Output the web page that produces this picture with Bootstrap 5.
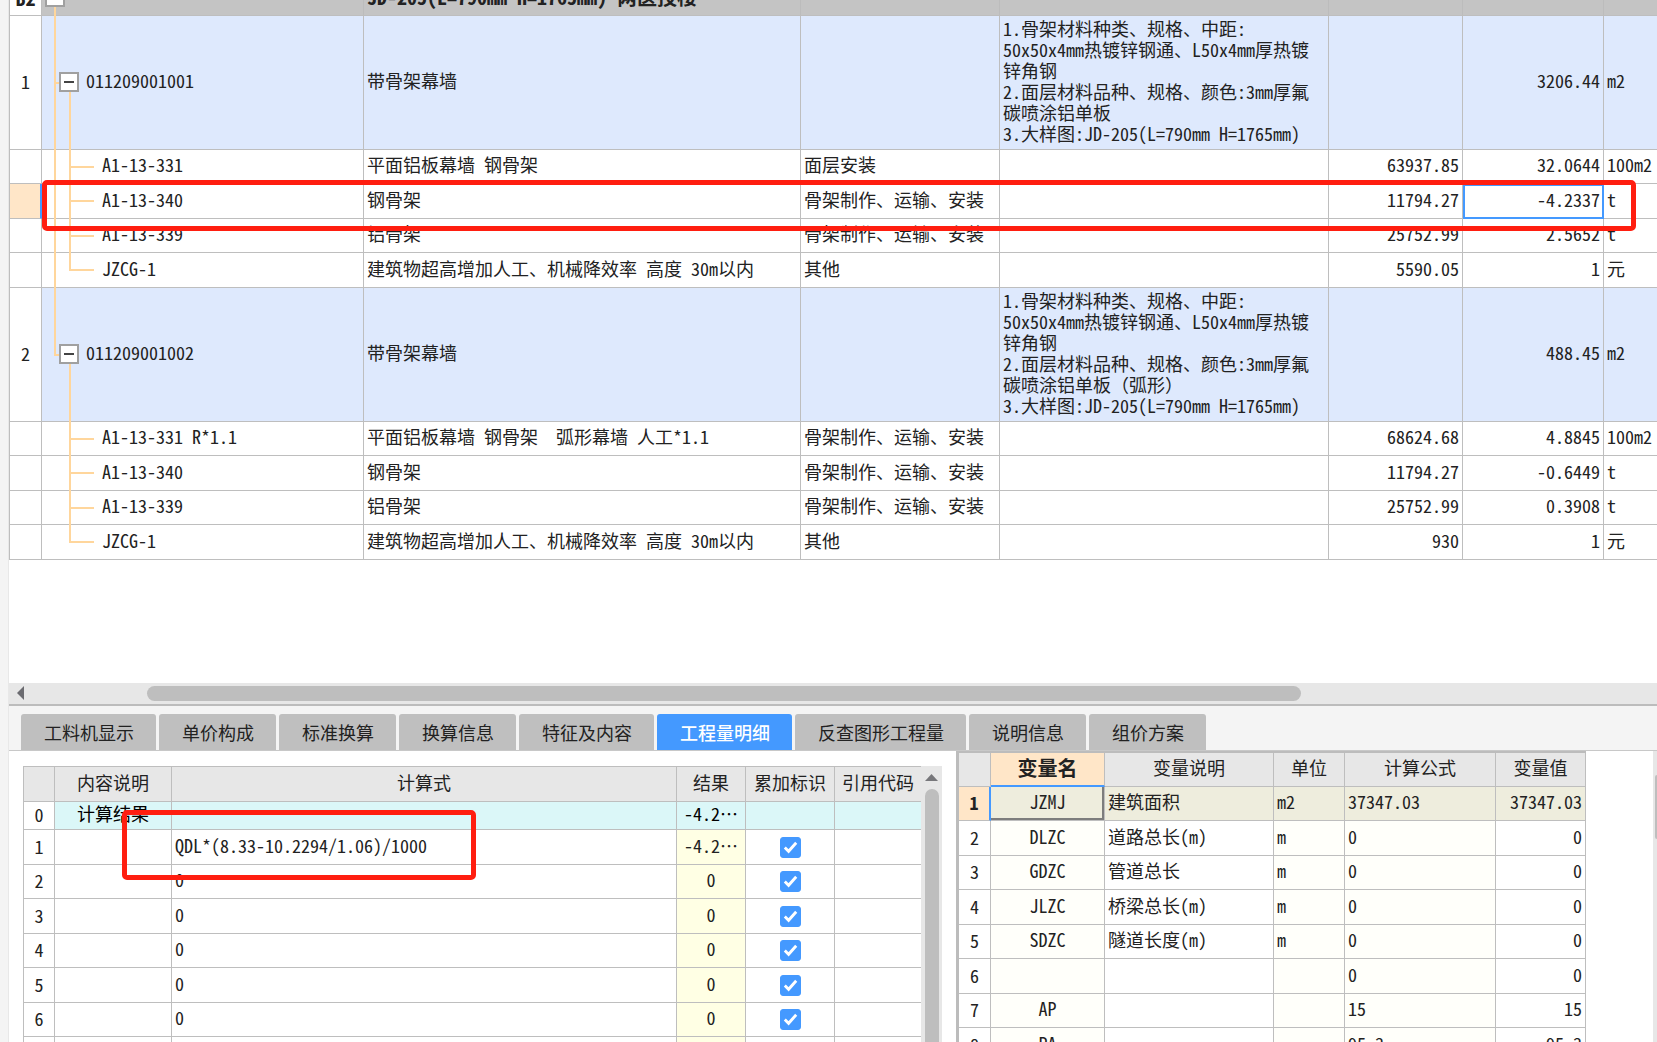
<!DOCTYPE html>
<html lang="zh-CN">
<head>
<meta charset="utf-8">
<meta name="viewport" content="width=device-width, initial-scale=1">
<title>工程量明细</title>
<link href="https://cdn.jsdelivr.net/npm/bootstrap@5.3.0/dist/css/bootstrap.min.css" rel="stylesheet">
<style>
:root{--line:#bebebe;--accent:#4499ff;--tree:#ffd69c;--hot:#ffe6c8;--callout:#ff1e10}
body{font:18px/21px "Noto Sans Mono CJK SC","Noto Sans CJK SC",monospace;color:#222;background:#fff}
.gutter{flex:0 0 9px;background:#f4f4f4;border-right:1px solid #e8e8e8}
.sheet{table-layout:fixed;border-collapse:separate;border-spacing:0}
.sheet td,.sheet th{border:solid var(--line);border-width:0 1px 1px 0;padding:0 3px 4px;font-weight:400;white-space:nowrap;overflow:hidden;vertical-align:middle}
.sheet .idx{padding:0 0 2px;text-align:center}
.sheet .num{text-align:right}

/* bill of quantities */
.bill{margin-top:-19px;border-left:1px solid var(--line)}
.bill tr{height:35px}
.bill tr.odd-step{height:34px}
.bill tr.item{height:134px}
.bill .item td:not(.idx){background:#dee9fd}
.bill .group td:not(.idx){background:#c4c4c4;border-right-color:#bcbcbc}
.bill .group td{font-size:20px;font-weight:700}
.bill .spec{white-space:normal}
.bill .current .idx{background:var(--hot);border-right:2px solid var(--accent)}
.bill .picked{border-right-color:var(--accent);border-bottom-color:var(--accent);box-shadow:inset 2px 2px 0 var(--accent),inset -1px -1px 0 var(--accent)}
.sheet td.tree{position:relative;overflow:visible;padding-left:60px}
.sheet .item td.tree{padding-left:44px}
.trunk::before,.tree::after,.tree i{content:"";position:absolute;background:var(--tree)}
.trunk::before{left:12px;top:0;width:2px;height:calc(100% + 1px)}
.trunk.start::before{top:50%}
.trunk.last::before{height:50%}
.tree::after{left:27px;top:0;width:2px;height:calc(100% + 1px)}
.group .tree::after{display:none}
.item .tree::after{top:50%;height:calc(50% + 1px)}
.sheet .tree.tail::after{height:50%}
.tree i{left:27px;top:50%;width:25px;height:2px;margin-top:-1px}
.item .tree i{left:12px;width:6px}
.toggler{position:absolute;z-index:1;left:17px;top:50%;margin-top:-11px;width:20px;height:20px;padding:0;background:#fff;border:2px solid #a0a0a0;display:flex;align-items:center;justify-content:center}
.group .toggler{left:3px}
.toggler::before{content:"";width:10px;height:2px;background:#444}
.canvas-end{height:123px}

/* scroll bars */
.hbar{height:21px;background:#e7e7e7;padding-bottom:1px}
.hbar .grip{height:15px;border-radius:8px;background:#bebebe;margin-left:123px;width:70%}
.vbar{flex:0 0 21px;background:#e7e7e7}
.vbar .grip{width:14px;border-radius:7px 7px 0 0;background:#bebebe}
.divider{height:2px;background:#bcbcbc}

/* tabs */
.tabstrip{background:#f4f4f4;border-bottom:1px solid #c8c8c8;padding:8px 12px 0;gap:3px;flex-wrap:nowrap}
.tabstrip .nav-link{font:18px/21px "Noto Sans CJK SC",sans-serif;height:36px;padding:0 22px 0 23px;border:0;border-radius:3px 3px 0 0;background:#bfbfbf;color:#222;white-space:nowrap}
.tabstrip .nav-link.active{background:var(--accent);color:#fff;font-weight:500}

/* lower panes */
.calc-pane{flex:0 0 947px;padding:15px 14px 0 14px}
.calc{border:solid var(--line);border-width:1px 0 0 1px}
.calc tr,.vars tr{height:35px}
.calc tr:nth-child(odd),.vars tr:nth-child(odd){height:34px}
.calc thead tr:nth-child(odd){height:35px}
.calc tbody tr.total{height:28px}
.sheet thead th{background:#e7e7e7;text-align:center;font-family:"Noto Sans CJK SC",sans-serif}
.calc .total td:not(.idx){background:#dbf7f8;color:#000}
.calc .res{background:#ffffe4;text-align:center}
.sheet .last-col{border-right:0}
.form-check-input.tick{width:21px;height:21px;margin:3px 0 0;float:none;border-radius:3px;vertical-align:middle}
.form-check-input.tick:checked{background-color:var(--accent);border-color:var(--accent);background-image:url("data:image/svg+xml,%3csvg xmlns='http://www.w3.org/2000/svg' viewBox='0 0 20 20'%3e%3cpath fill='none' stroke='%23fff' stroke-width='3' d='M4 10l4 4 8-9'/%3e%3c/svg%3e")}
.vars-pane{border-left:3px solid #bcbcbc}
.vars{border-top:2px solid #bcbcbc}
.vars td{background:#fff}
.vars td:nth-child(2),.vars td:nth-child(4),.vars td:nth-child(5){background:#fffffa}
.vars td:nth-child(2){text-align:center}
.vars .current td{background:#eeeddd}
.vars .current td.idx{background:var(--hot);font-weight:700;border-right:2px solid var(--accent)}
.vars .current td.picked{box-shadow:inset -2px -2px 0 #7d7d7d}
.vars thead th.hot{background:var(--hot);font-size:20px;font-weight:700;border-bottom:2px solid var(--accent)}
.edge{flex:0 0 4px;background:#e7e7e7}
.edge .grip{background:#bebebe;margin:24px 0 0 2px;height:64px;border-radius:4px 0 0 4px}

/* red callouts drawn over the grids */
.callout{position:absolute;z-index:3;border:5px solid var(--callout);border-radius:5px;pointer-events:none}
.callout.row-mark{left:33px;right:21px;top:180px;height:51px}
.callout.formula-mark{left:113px;top:59px;width:354px;height:70px}
</style>
</head>
<body>
<div class="d-flex vh-100 overflow-hidden">
  <div class="gutter"></div>
  <main class="d-flex flex-column flex-grow-1 overflow-hidden">
    <section class="position-relative overflow-hidden flex-shrink-0">
      <table class="sheet bill w-100">
        <colgroup><col style="width:32px"><col style="width:322px"><col><col style="width:199px"><col style="width:329px"><col style="width:134px"><col style="width:141px"><col style="width:53px"></colgroup>
        <tbody>
          <tr class="group"><td class="idx">B2</td><td class="tree trunk start"><button class="toggler" type="button" aria-label="折叠"></button></td><td>JD-205(L=790mm H=1765mm) 两医技楼</td><td></td><td></td><td></td><td></td><td class="last-col"></td></tr>
          <tr class="item"><td class="idx">1</td><td class="tree trunk"><i></i><button class="toggler" type="button" aria-label="折叠"></button>011209001001</td><td>带骨架幕墙</td><td></td><td class="spec">1.骨架材料种类、规格、中距:<br>50x50x4mm热镀锌钢通、L50x4mm厚热镀锌角钢<br>2.面层材料品种、规格、颜色:3mm厚氟碳喷涂铝单板<br>3.大样图:JD-205(L=790mm H=1765mm)</td><td></td><td class="num">3206.44</td><td class="last-col">m2</td></tr>
          <tr class="odd-step"><td class="idx"></td><td class="tree trunk"><i></i>A1-13-331</td><td>平面铝板幕墙 钢骨架</td><td>面层安装</td><td></td><td class="num">63937.85</td><td class="num">32.0644</td><td class="last-col">100m2</td></tr>
          <tr class="current"><td class="idx"></td><td class="tree trunk"><i></i>A1-13-340</td><td>钢骨架</td><td>骨架制作、运输、安装</td><td></td><td class="num">11794.27</td><td class="num picked">-4.2337</td><td class="last-col">t</td></tr>
          <tr class="odd-step"><td class="idx"></td><td class="tree trunk"><i></i>A1-13-339</td><td>铝骨架</td><td>骨架制作、运输、安装</td><td></td><td class="num">25752.99</td><td class="num">2.5652</td><td class="last-col">t</td></tr>
          <tr><td class="idx"></td><td class="tree trunk tail"><i></i>JZCG-1</td><td>建筑物超高增加人工、机械降效率 高度 30m以内</td><td>其他</td><td></td><td class="num">5590.05</td><td class="num">1</td><td class="last-col">元</td></tr>
          <tr class="item"><td class="idx">2</td><td class="tree trunk last"><i></i><button class="toggler" type="button" aria-label="折叠"></button>011209001002</td><td>带骨架幕墙</td><td></td><td class="spec">1.骨架材料种类、规格、中距:<br>50x50x4mm热镀锌钢通、L50x4mm厚热镀锌角钢<br>2.面层材料品种、规格、颜色:3mm厚氟碳喷涂铝单板（弧形）<br>3.大样图:JD-205(L=790mm H=1765mm)</td><td></td><td class="num">488.45</td><td class="last-col">m2</td></tr>
          <tr class="odd-step"><td class="idx"></td><td class="tree"><i></i>A1-13-331 R*1.1</td><td>平面铝板幕墙 钢骨架&nbsp; 弧形幕墙 人工*1.1</td><td>骨架制作、运输、安装</td><td></td><td class="num">68624.68</td><td class="num">4.8845</td><td class="last-col">100m2</td></tr>
          <tr><td class="idx"></td><td class="tree"><i></i>A1-13-340</td><td>钢骨架</td><td>骨架制作、运输、安装</td><td></td><td class="num">11794.27</td><td class="num">-0.6449</td><td class="last-col">t</td></tr>
          <tr class="odd-step"><td class="idx"></td><td class="tree"><i></i>A1-13-339</td><td>铝骨架</td><td>骨架制作、运输、安装</td><td></td><td class="num">25752.99</td><td class="num">0.3908</td><td class="last-col">t</td></tr>
          <tr><td class="idx"></td><td class="tree tail"><i></i>JZCG-1</td><td>建筑物超高增加人工、机械降效率 高度 30m以内</td><td>其他</td><td></td><td class="num">930</td><td class="num">1</td><td class="last-col">元</td></tr>
        </tbody>
      </table>
      <div class="canvas-end"></div>
      <div class="callout row-mark"></div>
    </section>

    <div class="hbar d-flex align-items-center flex-shrink-0">
      <svg class="ms-2 flex-shrink-0" width="7" height="14" viewBox="0 0 7 14"><path d="M7 0v14L0 7z" fill="#6b6b70"/></svg>
      <div class="grip"></div>
    </div>
    <div class="divider flex-shrink-0"></div>

    <nav class="nav tabstrip flex-shrink-0">
      <button class="nav-link" type="button">工料机显示</button>
      <button class="nav-link" type="button">单价构成</button>
      <button class="nav-link" type="button">标准换算</button>
      <button class="nav-link" type="button">换算信息</button>
      <button class="nav-link" type="button">特征及内容</button>
      <button class="nav-link active" type="button">工程量明细</button>
      <button class="nav-link" type="button">反查图形工程量</button>
      <button class="nav-link" type="button">说明信息</button>
      <button class="nav-link" type="button">组价方案</button>
    </nav>

    <section class="d-flex flex-grow-1 overflow-hidden">
      <div class="calc-pane d-flex position-relative overflow-hidden">
        <table class="sheet calc flex-grow-1 align-self-start">
          <colgroup><col style="width:31px"><col style="width:117px"><col><col style="width:69px"><col style="width:89px"><col style="width:86px"></colgroup>
          <thead><tr><th></th><th>内容说明</th><th>计算式</th><th>结果</th><th>累加标识</th><th class="last-col">引用代码</th></tr></thead>
          <tbody>
            <tr class="total"><td class="idx">0</td><td class="text-center">计算结果</td><td></td><td class="text-center">-4.2…</td><td></td><td class="last-col"></td></tr>
            <tr><td class="idx">1</td><td></td><td>QDL*(8.33-10.2294/1.06)/1000</td><td class="res">-4.2…</td><td class="text-center"><input class="form-check-input tick" type="checkbox" checked aria-label="累加标识 1"></td><td class="last-col"></td></tr>
            <tr><td class="idx">2</td><td></td><td>0</td><td class="res">0</td><td class="text-center"><input class="form-check-input tick" type="checkbox" checked aria-label="累加标识 2"></td><td class="last-col"></td></tr>
            <tr><td class="idx">3</td><td></td><td>0</td><td class="res">0</td><td class="text-center"><input class="form-check-input tick" type="checkbox" checked aria-label="累加标识 3"></td><td class="last-col"></td></tr>
            <tr><td class="idx">4</td><td></td><td>0</td><td class="res">0</td><td class="text-center"><input class="form-check-input tick" type="checkbox" checked aria-label="累加标识 4"></td><td class="last-col"></td></tr>
            <tr><td class="idx">5</td><td></td><td>0</td><td class="res">0</td><td class="text-center"><input class="form-check-input tick" type="checkbox" checked aria-label="累加标识 5"></td><td class="last-col"></td></tr>
            <tr><td class="idx">6</td><td></td><td>0</td><td class="res">0</td><td class="text-center"><input class="form-check-input tick" type="checkbox" checked aria-label="累加标识 6"></td><td class="last-col"></td></tr>
            <tr><td class="idx"></td><td></td><td></td><td class="res"></td><td></td><td class="last-col"></td></tr>
          </tbody>
        </table>
        <div class="vbar d-flex flex-column ps-1">
          <svg class="mt-2 mb-2 flex-shrink-0" width="13" height="7" viewBox="0 0 13 7"><path d="M0 7h13L6.500 0z" fill="#77777b"/></svg>
          <div class="grip flex-grow-1"></div>
        </div>
        <div class="callout formula-mark"></div>
      </div>
      <div class="vars-pane flex-grow-1 overflow-hidden">
        <table class="sheet vars">
          <colgroup><col style="width:32px"><col style="width:114px"><col style="width:169px"><col style="width:71px"><col style="width:151px"><col style="width:90px"></colgroup>
          <thead><tr><th></th><th class="hot">变量名</th><th>变量说明</th><th>单位</th><th>计算公式</th><th>变量值</th></tr></thead>
          <tbody>
            <tr class="current"><td class="idx">1</td><td class="picked">JZMJ</td><td>建筑面积</td><td>m2</td><td>37347.03</td><td class="num">37347.03</td></tr>
            <tr><td class="idx">2</td><td>DLZC</td><td>道路总长(m)</td><td>m</td><td>0</td><td class="num">0</td></tr>
            <tr><td class="idx">3</td><td>GDZC</td><td>管道总长</td><td>m</td><td>0</td><td class="num">0</td></tr>
            <tr><td class="idx">4</td><td>JLZC</td><td>桥梁总长(m)</td><td>m</td><td>0</td><td class="num">0</td></tr>
            <tr><td class="idx">5</td><td>SDZC</td><td>隧道长度(m)</td><td>m</td><td>0</td><td class="num">0</td></tr>
            <tr><td class="idx">6</td><td></td><td></td><td></td><td>0</td><td class="num">0</td></tr>
            <tr><td class="idx">7</td><td>AP</td><td></td><td></td><td>15</td><td class="num">15</td></tr>
            <tr><td class="idx">8</td><td>PA</td><td></td><td></td><td>95.3</td><td class="num">95.3</td></tr>
          </tbody>
        </table>
      </div>
      <div class="edge"><div class="grip"></div></div>
    </section>
  </main>
</div>
<script src="https://cdn.jsdelivr.net/npm/bootstrap@5.3.0/dist/js/bootstrap.bundle.min.js"></script>
</body>
</html>
